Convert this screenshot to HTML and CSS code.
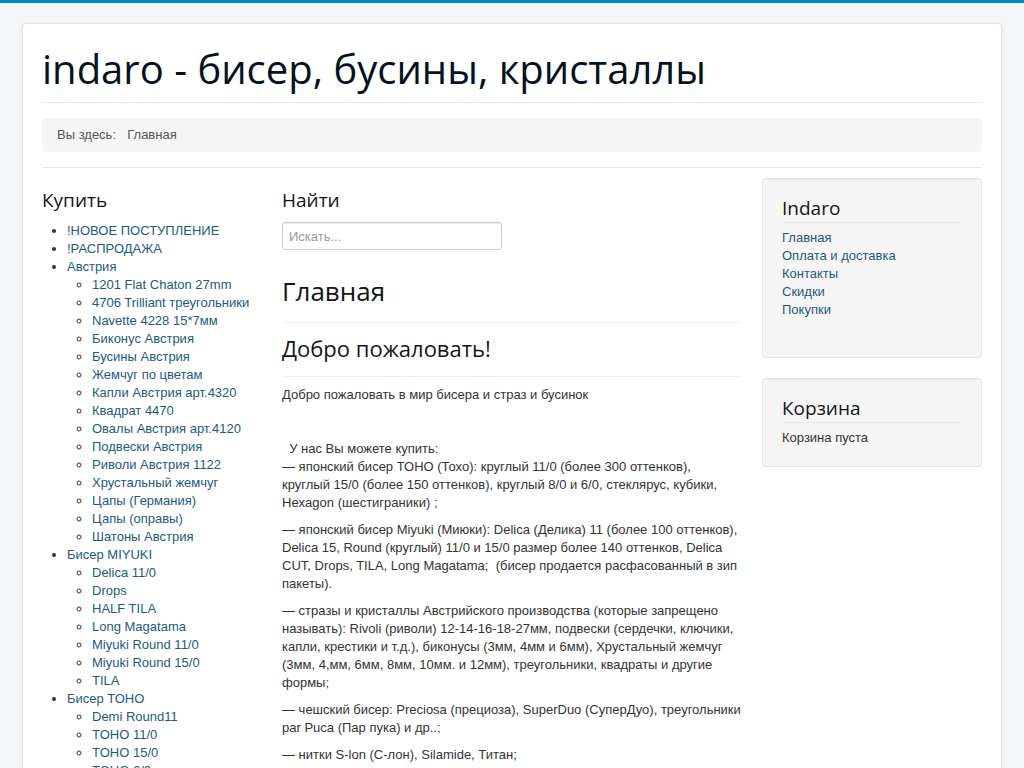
FILE: index.html
```html
<!DOCTYPE html>
<html lang="ru">
<head>
<meta charset="utf-8">
<title>indaro - бисер, бусины, кристаллы</title>
<link rel="stylesheet" href="styles.css">
</head>
<body>
<div class="container">
  <header class="header">
    <h1 class="site-title">indaro - бисер, бусины, кристаллы</h1>
  </header>
  <div class="breadcrumb"><span class="here">Вы здесь: &nbsp;</span><span>Главная</span></div>
  <hr class="sep">
  <div class="row">
    <aside class="col-left">
      <h3 class="mod-title">Купить</h3>
      <ul class="menu">
        <li><a href="#">!НОВОЕ ПОСТУПЛЕНИЕ</a></li>
        <li><a href="#">!РАСПРОДАЖА</a></li>
        <li><a href="#">Австрия</a>
          <ul>
            <li><a href="#">1201 Flat Chaton 27mm</a></li>
            <li><a href="#">4706 Trilliant треугольники</a></li>
            <li><a href="#">Navette 4228 15*7мм</a></li>
            <li><a href="#">Биконус Австрия</a></li>
            <li><a href="#">Бусины Австрия</a></li>
            <li><a href="#">Жемчуг по цветам</a></li>
            <li><a href="#">Капли Австрия арт.4320</a></li>
            <li><a href="#">Квадрат 4470</a></li>
            <li><a href="#">Овалы Австрия арт.4120</a></li>
            <li><a href="#">Подвески Австрия</a></li>
            <li><a href="#">Риволи Австрия 1122</a></li>
            <li><a href="#">Хрустальный жемчуг</a></li>
            <li><a href="#">Цапы (Германия)</a></li>
            <li><a href="#">Цапы (оправы)</a></li>
            <li><a href="#">Шатоны Австрия</a></li>
          </ul>
        </li>
        <li><a href="#">Бисер MIYUKI</a>
          <ul>
            <li><a href="#">Delica 11/0</a></li>
            <li><a href="#">Drops</a></li>
            <li><a href="#">HALF TILA</a></li>
            <li><a href="#">Long Magatama</a></li>
            <li><a href="#">Miyuki Round 11/0</a></li>
            <li><a href="#">Miyuki Round 15/0</a></li>
            <li><a href="#">TILA</a></li>
          </ul>
        </li>
        <li><a href="#">Бисер ТОНО</a>
          <ul>
            <li><a href="#">Demi Round11</a></li>
            <li><a href="#">TOHO 11/0</a></li>
            <li><a href="#">TOHO 15/0</a></li>
            <li><a href="#">TOHO 6/0</a></li>
            <li><a href="#">TOHO 8/0</a></li>
          </ul>
        </li>
      </ul>
    </aside>
    <main class="col-main">
      <h3 class="mod-title">Найти</h3>
      <input class="search" type="text" placeholder="Искать...">
      <h2 class="page-header big">Главная</h2>
      <h2 class="page-header">Добро пожаловать!</h2>
      <p>Добро пожаловать в мир бисера и страз и бусинок</p>
      <p>&nbsp;</p>
      <p>&nbsp; У нас Вы можете купить:<br>— японский бисер ТОНО (Тохо): круглый 11/0 (более 300 оттенков), круглый 15/0 (более 150 оттенков), круглый 8/0 и 6/0, стеклярус, кубики, Hexagon (шестиграники) ;</p>
      <p>— японский бисер Miyuki (Миюки): Delica (Делика) 11 (более 100 оттенков), Delica 15, Round (круглый) 11/0 и 15/0 размер более 140 оттенков, Delica CUT, Drops, TILA, Long Magatama;&nbsp; (бисер продается расфасованный в зип пакеты).</p>
      <p>— стразы и кристаллы Австрийского производства (которые запрещено называть): Rivoli (риволи) 12-14-16-18-27мм, подвески (сердечки, ключики, капли, крестики и т.д.), биконусы (3мм, 4мм и 6мм), Хрустальный жемчуг (3мм, 4,мм, 6мм, 8мм, 10мм. и 12мм), треугольники, квадраты и другие формы;</p>
      <p>— чешский бисер: Preciosa (прециоза), SuperDuo (СуперДуо), треугольники par Puca (Пар пука) и др..;</p>
      <p>— нитки S-lon (С-лон), Silamide, Титан;</p>
    </main>
    <aside class="col-right">
      <div class="well">
        <h3 class="well-title">Indaro</h3>
        <ul class="nav">
          <li><a href="#">Главная</a></li>
          <li><a href="#">Оплата и доставка</a></li>
          <li><a href="#">Контакты</a></li>
          <li><a href="#">Скидки</a></li>
          <li><a href="#">Покупки</a></li>
        </ul>
      </div>
      <div class="well">
        <h3 class="well-title">Корзина</h3>
        <div class="cart">Корзина пуста</div>
      </div>
    </aside>
  </div>
</div>
</body>
</html>
```

FILE: styles.css
```css
html, body {
  margin: 0;
  padding: 0;
}
body {
  background: #f4f6f7;
  border-top: 3px solid #0088cc;
  padding: 20px 0;
  font-family: "Liberation Sans", Arial, Helvetica, sans-serif;
  font-size: 13px;
  line-height: 18px;
  color: #333333;
}
a {
  color: #1c5a7e;
  text-decoration: none;
}
.container {
  width: 940px;
  margin: 0 auto;
  background: #ffffff;
  padding: 19px 19px 20px;
  border: 1px solid #e3e3e3;
  border-radius: 4px;
  box-shadow: 0 0 6px rgba(0, 0, 0, 0.05);
  box-sizing: content-box;
}
.header {
  border-bottom: 1px solid #e8e8e8;
  padding-bottom: 8px;
  margin-bottom: 15px;
}
.site-title {
  margin: 0;
  padding-top: 0;
  font-family: "Open Sans", sans-serif;
  font-weight: 400;
  font-size: 40px;
  line-height: 51px;
  color: #04121f;
}
.breadcrumb {
  background: #f5f5f5;
  border-radius: 4px;
  padding: 7px 15px;
  height: 20px;
  line-height: 19px;
  color: #555555;
}
.here {
  color: #555;
  margin-right: 4px;
}
.sep {
  border: 0;
  border-top: 1px solid #e8e8e8;
  margin: 15px 0 10px;
  height: 0;
}
.row {
  display: grid;
  grid-template-columns: 220px 460px 220px;
  column-gap: 20px;
  align-items: start;
}
.mod-title {
  font-family: "Open Sans", sans-serif;
  font-weight: 400;
  font-size: 19px;
  line-height: 20px;
  color: #151515;
  margin: 12px 0 12px;
}
.menu, .menu ul {
  margin: 0 0 9px 25px;
  padding: 0;
}
.menu ul {
  margin-bottom: 0;
  list-style-type: circle;
}
.menu li {
  line-height: 18px;
}
.search {
  display: block;
  box-sizing: border-box;
  width: 220px;
  height: 28px;
  margin: 0 0 23px 0;
  padding: 4px 6px;
  border: 1px solid #cccccc;
  border-radius: 3px;
  box-shadow: inset 0 1px 1px rgba(0,0,0,0.075);
  font-family: "Liberation Sans", Arial, sans-serif;
  font-size: 13px;
  color: #555;
}
.search::placeholder {
  color: #999;
}
.page-header {
  font-family: "Open Sans", sans-serif;
  font-weight: 400;
  color: #151515;
  margin: 10px 0 9px;
  padding-bottom: 13px;
  border-bottom: 1px solid #eeeeee;
  font-size: 22px;
  line-height: 30px;
}
.page-header.big {
  font-size: 26px;
  line-height: 36px;
  margin: 0;
  padding-bottom: 13px;
}
.col-main p {
  margin: 0 0 9px;
}
.well {
  background: #f5f5f5;
  border: 1px solid #e3e3e3;
  border-radius: 4px;
  padding: 19px;
  margin-bottom: 20px;
  box-shadow: inset 0 1px 1px rgba(0,0,0,0.05);
}
.well-title {
  font-family: "Open Sans", sans-serif;
  font-weight: 400;
  font-size: 19px;
  line-height: 20px;
  color: #151515;
  margin: 0 0 6px;
  padding-bottom: 4px;
  border-bottom: 1px solid #e8e8e8;
}
.nav {
  list-style: none;
  margin: 0 0 19px;
  padding: 0;
}
.nav li {
  line-height: 18px;
}
.cart {
  line-height: 18px;
}
```
